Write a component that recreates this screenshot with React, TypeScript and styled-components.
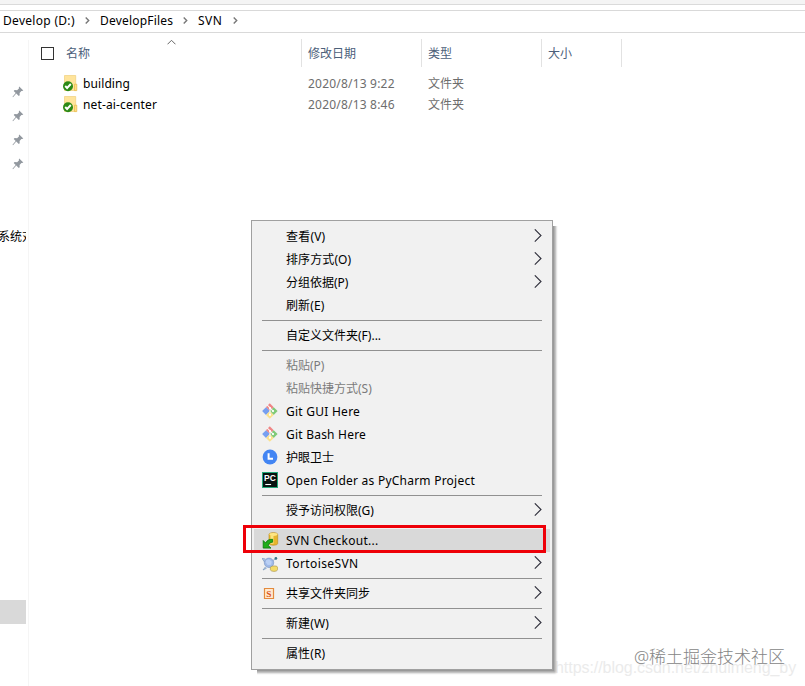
import React from 'react';
import styled, { createGlobalStyle, css } from 'styled-components';

const GlobalStyle = createGlobalStyle`
  * { box-sizing: border-box; }
  body {
    margin: 0;
    overflow: hidden;
    background: #fff;
    font-family: "Noto Sans", "Noto Sans CJK SC", sans-serif;
    font-size: 12px;
    line-height: 17px;
    color: #000;
  }
  svg { display: block; }
`;

const Window = styled.main`
  position: relative;
  width: 805px;
  height: 686px;
  overflow: hidden;
  background: #fff;
`;

const Ribbon = styled.div`
  height: 5px;
  background: #f4f4f4;
  border-bottom: 1px solid #dadada;
`;

const AddressBar = styled.nav`
  display: flex;
  align-items: center;
  height: 23px;
  margin-top: 5px;
  padding: 0 0 2px 3px;
  border-top: 1px solid #d9d9d9;
  border-bottom: 1px solid #d9d9d9;
`;

const Text = styled.span<{ $spacing?: number }>`
  white-space: nowrap;
  letter-spacing: ${({ $spacing = 0 }) => $spacing}px;
`;

const Crumb = styled(Text)<{ $width: number }>`
  flex: none;
  width: ${({ $width }) => $width}px;
`;

const CrumbArrow = styled.span<{ $gap: number }>`
  flex: none;
  width: ${({ $gap }) => $gap}px;
`;

const Body = styled.div`
  display: flex;
  height: 653px;
`;

const Sidebar = styled.aside`
  flex: none;
  width: 29px;
  height: 646px;
  margin-top: 7px;
  border-right: 1px solid #f5f5f5;
`;

const Pins = styled.div`
  display: flex;
  flex-direction: column;
  gap: 12px;
  padding: 46px 0 0 12px;
`;

const SideLabel = styled.div`
  width: 26px;
  height: 18px;
  margin-top: 57px;
  overflow: hidden;
  line-height: 19px;
  white-space: nowrap;
  text-indent: -2px;
`;

const SideSelection = styled.div`
  width: 26px;
  height: 24px;
  margin-top: 355px;
  background: #d9d9d9;
`;

const Files = styled.section`
  flex: 1;
`;

const columns = css`
  display: grid;
  grid-template-columns: 273px 120px 120px 80px;
`;

const Headers = styled.div`
  ${columns}
  position: relative;
  height: 28px;
  margin-top: 6px;
  color: #4c607a;
`;

const Header = styled.div`
  display: flex;
  align-items: center;
  border-right: 1px solid #e2e2e2;
  padding-left: 6px;
  &:first-child { padding-left: 12px; gap: 12px; }
  ${Text} { padding-top: 1px; }
`;

const Checkbox = styled.span`
  width: 13px;
  height: 13px;
  border: 1px solid #333;
`;

const SortMark = styled.span`
  position: absolute;
  left: 138px;
  top: 0;
`;

const Rows = styled.div`
  margin-top: 6px;
`;

const Row = styled.div`
  ${columns}
  height: 21px;
`;

const Cell = styled.div`
  display: flex;
  align-items: center;
  padding-left: 6px;
  color: #6d6d6d;
  &:first-child { padding-left: 34px; gap: 4px; color: #000; }
`;

const Menu = styled.div`
  position: absolute;
  left: 251px;
  top: 220px;
  width: 302px;
  height: 450px;
  padding: 4px 2px;
  background: #f1f1f1;
  border: 1px solid #a0a0a0;
  box-shadow: 1px 1px 0 #999, 2px 2px 2px 1px #aaa;
  clip-path: polygon(0 0, 302px 0, 302px 6px, 310px 6px, 310px 458px, 6px 458px, 6px 450px, 0 450px);
`;

const Item = styled.div<{ $muted?: boolean; $active?: boolean }>`
  display: grid;
  grid-template-columns: 32px 1fr 16px;
  align-items: center;
  height: 23px;
  color: ${({ $muted }) => ($muted ? '#7b7b7b' : '#000')};
  background: ${({ $active }) => ($active ? '#d9d9d9' : 'transparent')};
`;

const IconSlot = styled.span`
  padding-left: 8px;
`;

const HanText = styled(Text)`
  padding-bottom: 1px;
`;

const Separator = styled.div`
  height: 7px;
  margin: 0 8px 0 8px;
  padding-top: 3px;
  &::after { content: ''; display: block; height: 1px; background: #919191; }
`;

const Highlight = styled.div`
  position: absolute;
  left: 243px;
  top: 525px;
  width: 303px;
  height: 28px;
  border: 3px solid #ee0008;
`;

const SiteMark = styled.div`
  position: absolute;
  right: 20px;
  top: 645px;
  font-size: 17px;
  font-weight: 300;
  line-height: 24px;
  color: #858585;
  white-space: nowrap;
`;

const UrlMark = styled.div`
  position: absolute;
  left: 555px;
  top: 658px;
  font: 16px/20px "Liberation Sans", sans-serif;
  letter-spacing: -0.05px;
  color: #ebebeb;
  white-space: nowrap;
`;

const Chevron = () => (
  <svg width="5" height="7" viewBox="0 0 5 7" fill="none" stroke="#777" strokeWidth="1.4">
    <path d="M.7.5 3.7 3.5.7 6.5" />
  </svg>
);

const SubmenuArrow = () => (
  <svg width="9" height="15" viewBox="0 0 9 15" fill="none" stroke="#30303c" strokeWidth="1.1">
    <path d="M.8.3 7 6.5.8 12.7" />
  </svg>
);

const Pin = () => (
  <svg width="12" height="12" viewBox="0 0 12 12" fill="#92989f">
    <path d="m7.2.5 4.1 4.1-1.2.5-.7-.1-1.8 2 .1 2.3-.9.8-2.5-2.5L1 11.2l-.5-.5 3.2-3.6-2-2.2.9-1 2.5.3 2-1.9-.3-.8z" />
  </svg>
);

const FolderIcon = () => (
  <svg width="16" height="17" viewBox="0 0 16 17">
    <path d="M1.5.5h11.2v15H1.5z" fill="#ffe49b" stroke="#efd07c" strokeWidth=".7" />
    <path d="M11.5 9.2h2.3v6.4h-2.3z" fill="#ffdf84" stroke="#e6b94b" strokeWidth=".7" />
    <circle cx="5" cy="11.2" r="5" fill="#2c8a16" />
    <path d="m2.2 11 1.9 2 3.7-4" fill="none" stroke="#fff" strokeWidth="1.9" />
  </svg>
);

const GitIcon = () => (
  <svg width="16" height="17" viewBox="0 0 16 17">
    <path d="m7.8.3 3.9 3.9-3.9 3.9L3.9 4.2z" fill="#ef8585" />
    <path d="m4 4.2 3.9 3.9L4 12 .1 8.1z" fill="#779ff0" />
    <path d="m11.7 4.2 3.9 3.9-3.9 3.9-3.9-3.9z" fill="#7fca77" />
    <path d="m7.8 8.1 3.9 3.9-3.9 3.8L4 12z" fill="#fbe18d" />
    <path d="m5 1.8 3 3v7M8 5l3.2 3.2" fill="none" stroke="#f5f5f5" strokeWidth="1.1" />
    <circle cx="8" cy="5.1" r="1.1" fill="#fff" />
    <circle cx="11" cy="8.1" r="1.1" fill="#fff" />
    <circle cx="8" cy="11.8" r="1.1" fill="#fff" />
  </svg>
);

const GuardIcon = () => (
  <svg width="16" height="17" viewBox="0 0 16 17">
    <circle cx="8" cy="8" r="7.4" fill="#4385f3" />
    <path d="M6.6 4.2v5.5H11" fill="none" stroke="#fff" strokeWidth="2" />
  </svg>
);

const PyCharmIcon = () => (
  <svg width="16" height="17" viewBox="0 0 16 17">
    <path d="M0 0h16v16H0z" fill="#20a777" />
    <path d="M1 1h14v14H1z" fill="#07120f" />
    <path d="M3.3 12.5h5.8" stroke="#fff" strokeWidth="1.1" />
    <text x="2" y="8.9" fill="#fff" fontFamily="Liberation Sans, sans-serif" fontSize="8.5" fontWeight="700">PC</text>
  </svg>
);

const CheckoutIcon = () => (
  <svg width="17" height="17" viewBox="0 0 17 17">
    <path d="M7 2.5C7 0 15.7 0 15.7 2.5v9c0 2.3-8.7 2.3-8.7 0z" fill="#e7b52d" stroke="#b98a19" strokeWidth=".6" />
    <path d="M8.5 3.4h3v8.4h-3z" fill="#fff09a" opacity=".8" />
    <ellipse cx="11.4" cy="2.5" rx="4" ry="1.4" fill="#ffe684" />
    <path d="M1.2 8.5v7.6H9l-2.7-2.6c.5-2.2 1.7-3.1 4.3-3.3V7.3C7.2 7.2 4.7 8.3 3.7 11z" fill="#20ad1b" stroke="#087909" strokeWidth=".8" />
  </svg>
);

const TortoiseIcon = () => (
  <svg width="16" height="16" viewBox="0 0 16 16">
    <path d="M2.5 6 0 2.4 3.4 3M3.5 10.8 1 14l3.6-1.8M10 5l3.8-2.2" fill="#b7cce8" stroke="#7796bc" strokeWidth=".7" />
    <circle cx="7" cy="6.8" r="4.7" fill="#9fb9e7" stroke="#7c98c7" strokeWidth=".7" />
    <path d="m4 4.3 3-1 2.8 2.4-.7 3-3.4.3-1.9-2.4z" fill="#bad0f5" />
    <circle cx="13.9" cy="2.4" r="1.4" fill="#397788" />
    <path d="M8.4 11.5c0-1.5 6.7-2.5 7.2-.2v2.3c-.5 2.6-7.2 2.2-7.2 0z" fill="#f3db68" stroke="#a58e47" strokeWidth=".6" />
  </svg>
);

const ShareIcon = () => (
  <svg width="14" height="14" viewBox="0 0 14 14">
    <path d="M2.5 1.5h9v10h-9z" fill="#ffe9cf" stroke="#e38a3d" strokeWidth="1.2" />
    <text x="4.3" y="9.8" fill="#d84d12" fontFamily="Liberation Serif, serif" fontSize="9.2" fontWeight="700">S</text>
  </svg>
);

type Entry = {
  label: string;
  spacing?: number;
  icon?: React.ReactNode;
  submenu?: boolean;
  muted?: boolean;
  active?: boolean;
};

const groups: Entry[][] = [
  [
    { label: '查看(V)', spacing: 0.2, submenu: true },
    { label: '排序方式(O)', spacing: 0.1, submenu: true },
    { label: '分组依据(P)', submenu: true },
    { label: '刷新(E)', spacing: 0.1 },
  ],
  [{ label: '自定义文件夹(F)...' }],
  [
    { label: '粘贴(P)', muted: true },
    { label: '粘贴快捷方式(S)', muted: true },
    { label: 'Git GUI Here', spacing: 0.25, icon: <GitIcon /> },
    { label: 'Git Bash Here', spacing: 0.22, icon: <GitIcon /> },
    { label: '护眼卫士', icon: <GuardIcon /> },
    { label: 'Open Folder as PyCharm Project', spacing: 0.23, icon: <PyCharmIcon /> },
  ],
  [{ label: '授予访问权限(G)', submenu: true }],
  [
    { label: 'SVN Checkout...', spacing: 0.25, icon: <CheckoutIcon />, active: true },
    { label: 'TortoiseSVN', spacing: 0.4, icon: <TortoiseIcon />, submenu: true },
  ],
  [{ label: '共享文件夹同步', icon: <ShareIcon />, submenu: true }],
  [{ label: '新建(W)', spacing: 0.1, submenu: true }],
  [{ label: '属性(R)', spacing: 0.1 }],
];

const hasHan = (label: string) => /[\u4e00-\u9fff]/.test(label);

const files = [
  { name: 'building', spacing: 0.1, date: '2020/8/13 9:22' },
  { name: 'net-ai-center', spacing: 0.15, date: '2020/8/13 8:46' },
];

export default function App() {
  return (
    <>
      <GlobalStyle />
      <Window>
        <Ribbon />
        <AddressBar>
          <Crumb $width={82} $spacing={0.3}>Develop (D:)</Crumb>
          <CrumbArrow $gap={15}><Chevron /></CrumbArrow>
          <Crumb $width={83} $spacing={0.2}>DevelopFiles</Crumb>
          <CrumbArrow $gap={15}><Chevron /></CrumbArrow>
          <Crumb $width={35} $spacing={0.5}>SVN</Crumb>
          <CrumbArrow $gap={15}><Chevron /></CrumbArrow>
        </AddressBar>
        <Body>
          <Sidebar>
            <Pins><Pin /><Pin /><Pin /><Pin /></Pins>
            <SideLabel>系统对</SideLabel>
            <SideSelection />
          </Sidebar>
          <Files>
            <Headers>
              <Header><Checkbox /><Text>名称</Text></Header>
              <Header><Text>修改日期</Text></Header>
              <Header><Text>类型</Text></Header>
              <Header><Text>大小</Text></Header>
              <SortMark>
                <svg width="9" height="6" viewBox="0 0 9 6" fill="none" stroke="#666"><path d="m.5 5.3 4-4 4 4" /></svg>
              </SortMark>
            </Headers>
            <Rows>
              {files.map((file) => (
                <Row key={file.name}>
                  <Cell><FolderIcon /><Text $spacing={file.spacing}>{file.name}</Text></Cell>
                  <Cell><Text $spacing={0.2}>{file.date}</Text></Cell>
                  <Cell><Text>文件夹</Text></Cell>
                </Row>
              ))}
            </Rows>
          </Files>
        </Body>
        <UrlMark>https://blog.csdn.net/zhuimeng_by</UrlMark>
        <SiteMark>@稀土掘金技术社区</SiteMark>
        <Menu>
          {groups.map((group, index) => (
            <React.Fragment key={group[0].label}>
              {index > 0 && <Separator />}
              {group.map((item) => {
                const Label = hasHan(item.label) ? HanText : Text;
                return (
                  <Item key={item.label} $muted={item.muted} $active={item.active}>
                    <IconSlot>{item.icon}</IconSlot>
                    <Label $spacing={item.spacing}>{item.label}</Label>
                    {item.submenu && <SubmenuArrow />}
                  </Item>
                );
              })}
            </React.Fragment>
          ))}
        </Menu>
        <Highlight />
      </Window>
    </>
  );
}
